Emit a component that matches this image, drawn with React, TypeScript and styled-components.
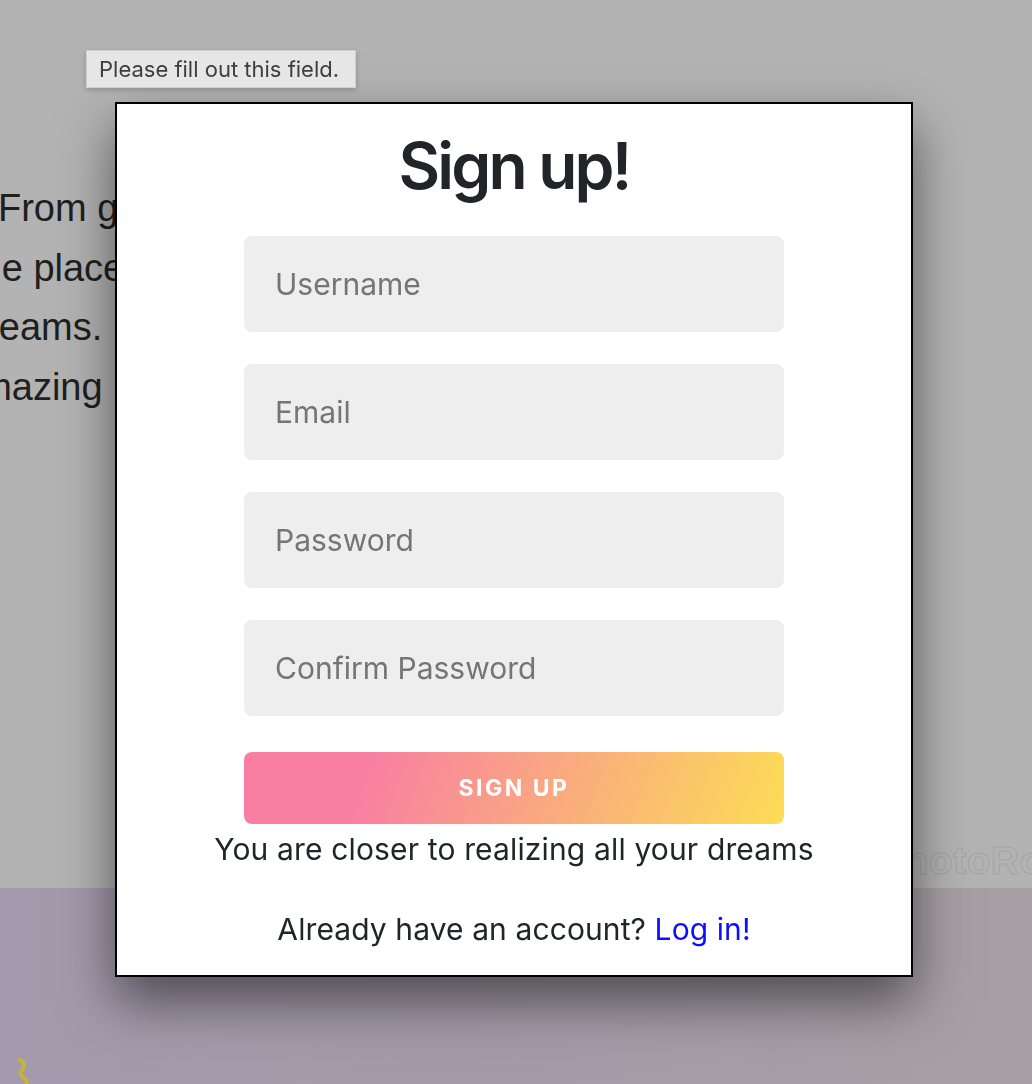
import styled, { createGlobalStyle } from 'styled-components';

const GlobalStyle = createGlobalStyle`
  html, body {
    margin: 0;
    padding: 0;
    overflow: hidden;
  }

  body {
    width: 1032px;
    height: 1084px;
    background: #b3b3b3;
  }

  * {
    box-sizing: border-box;
  }
`;

const fields = ['Username', 'Email', 'Password', 'Confirm Password'];

const introLines = [
  { text: 'From gorgeous gowns to sharp suits,', shift: -2 },
  { text: 'the place to find the outfit of your', shift: -30 },
  { text: 'dreams.', shift: -35 },
  { text: 'amazing', shift: -41 },
];

export default function App() {
  return (
    <>
      <GlobalStyle />
      <Page>
        <Hero>
          <Intro>
            {introLines.map((line) => (
              <IntroLine key={line.text} shift={line.shift}>
                {line.text}
              </IntroLine>
            ))}
          </Intro>
          <Watermark>PhotoRoom</Watermark>
        </Hero>
        <Band>
          <Squiggle width="16" height="30" viewBox="0 0 16 30">
            <path
              d="M4 2 C9 4 9 9 6 12 C3 15 5 19 9 21 C12 23 11 27 10 30"
              fill="none"
              stroke="#c9b239"
              strokeWidth="4"
              strokeLinecap="round"
            />
          </Squiggle>
        </Band>
      </Page>

      <Tooltip>Please fill out this field.</Tooltip>

      <Overlay>
        <Modal>
          <Title>Sign up!</Title>
          <Form onSubmit={(e) => e.preventDefault()}>
            {fields.map((field) => (
              <Input
                key={field}
                type={field.includes('Password') ? 'password' : 'text'}
                placeholder={field}
              />
            ))}
            <SubmitButton type="submit">Sign up</SubmitButton>
          </Form>
          <Tagline>You are closer to realizing all your dreams</Tagline>
          <LoginText>
            Already have an account? <LoginLink href="#">Log in!</LoginLink>
          </LoginText>
        </Modal>
      </Overlay>
    </>
  );
}

const Page = styled.div`
  width: 100%;
  height: 1084px;
  display: flex;
  flex-direction: column;
`;

const Hero = styled.section`
  position: relative;
  height: 888px;
  padding-top: 179px;
  overflow: hidden;
  background: #b3b3b3;
`;

const Intro = styled.div`
  display: flex;
  flex-direction: column;
`;

const IntroLine = styled.p<{ shift: number }>`
  margin: 0 0 0 ${(props) => props.shift}px;
  white-space: nowrap;

  color: #1f1f1f;
  font-family: 'Liberation Sans', Arial, sans-serif;
  font-size: 38px;
  line-height: 59.5px;
`;

const Watermark = styled.span`
  position: absolute;
  top: 841px;
  left: 878px;
  white-space: nowrap;

  color: transparent;
  -webkit-text-stroke: 1px #a4a4a4;
  font-family: 'Liberation Sans', Arial, sans-serif;
  font-size: 39px;
  font-weight: 700;
  letter-spacing: 0.5px;
  line-height: 1;
`;

const Band = styled.section`
  flex: 1;
  display: flex;
  align-items: flex-end;
  padding-left: 16px;

  background: linear-gradient(90deg, #a39aad 0%, #a49ba9 50%, #a6a0a4 100%);
`;

const Squiggle = styled.svg`
  display: block;
  margin-bottom: -4px;
`;

const Tooltip = styled.div`
  position: fixed;
  top: 50px;
  left: 86px;
  width: 270px;
  height: 38px;
  display: flex;
  align-items: center;
  padding-left: 12px;
  z-index: 20;

  background: #e6e6e6;
  border: 1px solid #cfcfcf;
  box-shadow: 0 2px 6px rgba(0, 0, 0, 0.2);
  color: #3e3e3e;
  font-family: Inter, 'Noto Sans', sans-serif;
  font-size: 22px;
`;

const Overlay = styled.div`
  position: fixed;
  inset: 0;
  display: flex;
  justify-content: center;
  align-items: flex-start;
  padding: 102px 4px 0 0;
  z-index: 10;
`;

const Modal = styled.div`
  width: 798px;
  height: 875px;
  display: flex;
  flex-direction: column;
  align-items: center;
  padding: 23px 0 28px;

  background: #ffffff;
  border: 2px solid #000000;
  box-shadow: 0 24px 50px rgba(0, 0, 0, 0.52);
  font-family: Inter, 'Noto Sans', sans-serif;
  color: #212529;
`;

const Title = styled.h1`
  margin: 0;
  font-size: 64px;
  font-weight: 600;
  letter-spacing: -2.8px;
  line-height: 77px;
`;

const Form = styled.form`
  width: 540px;
  display: flex;
  flex-direction: column;
  gap: 32px;
  margin-top: 32px;
`;

const Input = styled.input`
  width: 100%;
  height: 96px;
  padding: 0 31px;

  background: #eeeeee;
  border: none;
  border-radius: 8px;
  outline: none;
  color: #212529;
  font-family: Inter, 'Noto Sans', sans-serif;
  font-size: 30px;

  &::placeholder {
    color: #757575;
  }
`;

const SubmitButton = styled.button`
  width: 100%;
  height: 72px;
  margin-top: 4px;

  background: linear-gradient(110deg, #f87ea2 22%, #fcdd56 100%);
  border: none;
  border-radius: 8px;
  color: #ffffff;
  font-family: Inter, 'Noto Sans', sans-serif;
  font-size: 23px;
  font-weight: 700;
  letter-spacing: 2.5px;
  text-transform: uppercase;
  cursor: pointer;
`;

const Tagline = styled.p`
  margin: 7px 0 0;
  font-size: 30px;
  line-height: 36px;
  letter-spacing: 0.15px;
`;

const LoginText = styled.p`
  margin: 44px 0 0;
  font-size: 30px;
  line-height: 36px;
  letter-spacing: 0.1px;
`;

const LoginLink = styled.a`
  color: #0d0dff;
  text-decoration: none;
`;
